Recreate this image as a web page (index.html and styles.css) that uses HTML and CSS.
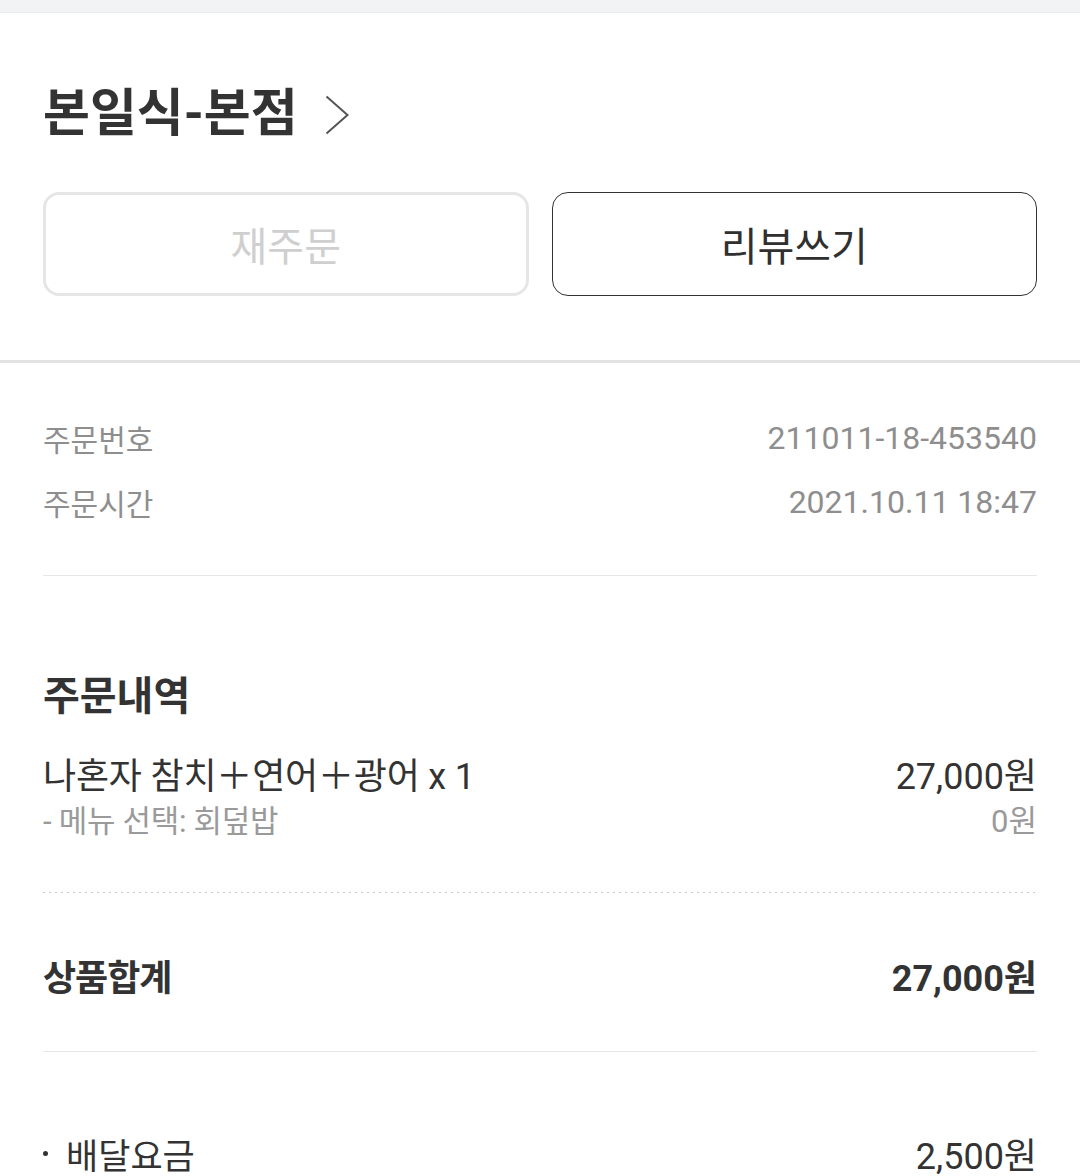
FILE: index.html
```html
<!DOCTYPE html>
<html lang="ko">
<head>
<meta charset="utf-8">
<title>주문상세</title>
<link rel="stylesheet" href="styles.css">
</head>
<body>
<div class="topbar"></div>
<section class="store">
  <div class="store-title">
    <h1>본일식-본점</h1>
    <svg class="chev" width="25" height="40" viewBox="0 0 25 40"><polyline points="1.5,1.5 22.5,20 1.5,38.5" fill="none" stroke="#555" stroke-width="2"/></svg>
  </div>
  <div class="actions">
    <button class="btn btn-off">재주문</button>
    <button class="btn btn-on">리뷰쓰기</button>
  </div>
</section>
<section class="info">
  <div class="row info-row"><span class="ko">주문번호</span><span class="num">211011-18-453540</span></div>
  <div class="row info-row"><span class="ko">주문시간</span><span class="num">2021.10.11 18:47</span></div>
</section>
<section class="order">
  <h2 class="ko">주문내역</h2>
  <div class="row item-row"><span class="ko">나혼자 참치＋연어＋광어 x 1</span><span class="price">27,000원</span></div>
  <div class="row opt-row"><span class="ko">- 메뉴 선택: 회덮밥</span><span class="price">0원</span></div>
</section>
<div class="dotted"></div>
<section class="sum">
  <div class="row sum-row"><span class="ko">상품합계</span><span class="price">27,000원</span></div>
</section>
<section class="fees">
  <div class="row fee-row"><span class="fee-label"><i class="dot"></i><span class="ko">배달요금</span></span><span class="price">2,500원</span></div>
</section>
</body>
</html>
```

FILE: styles.css
```css
* { box-sizing: border-box; }
html, body { margin: 0; padding: 0; background: #fff; }
body {
  font-family: Roboto, "Noto Sans CJK KR", sans-serif;
  color: #333;
  width: 1080px;
  overflow: hidden;
}
.topbar {
  height: 13px;
  background: #f2f3f5;
  border-bottom: 1px solid #ebecee;
}
.store {
  padding: 71px 43px 64px;
  border-bottom: 3px solid #e2e2e2;
}
.store-title {
  display: flex;
  align-items: center;
  gap: 27px;
  height: 60px;
}
.store-title h1 {
  margin: 0;
  font-size: 51px;
  font-weight: 700;
  line-height: 60px;
  color: #333;
}
.chev { display: block; margin-top: 2px; }
.actions {
  display: grid;
  grid-template-columns: 1fr 1fr;
  gap: 23px;
  margin-top: 48px;
}
.btn {
  height: 104px;
  border-radius: 16px;
  background: #fff;
  font-family: Roboto, "Noto Sans CJK KR", sans-serif;
  font-size: 40px;
  padding: 0;
}
.btn-off { border: 3px solid #e6e6e6; color: #cfcfcf; }
.btn-on { border: 1.5px solid #333; color: #303030; }
.row {
  display: flex;
  justify-content: space-between;
  align-items: center;
}
.info {
  margin: 0 43px;
  padding: 43px 0 41px;
  border-bottom: 1px solid #e6e6e6;
}
.info-row {
  height: 64px;
  font-size: 32px;
  color: #8e8e8e;
}
.info-row .ko { font-size: 30px; }
.order {
  margin: 0 43px;
  padding: 93px 0 53px;
}
.order h2 {
  margin: 0 0 24px;
  font-size: 40px;
  font-weight: 700;
  line-height: 56px;
  color: #333;
}
.item-row { height: 48px; font-size: 36px; color: #333; }
.item-row .ko { letter-spacing: -0.2px; }
.opt-row { height: 42px; font-size: 31px; color: #9a9a9a; }
.opt-row .ko { letter-spacing: -0.3px; }
.dotted {
  margin: 0 43px;
  height: 1px;
  background: repeating-linear-gradient(to right, #c9c9c9 0 2px, transparent 2px 6px);
}
.sum {
  margin: 0 43px;
  padding: 54px 0 48px;
  border-bottom: 1px solid #e6e6e6;
}
.sum-row {
  height: 56px;
  font-size: 36px;
  font-weight: 700;
  color: #333;
}
.sum-row .ko { letter-spacing: -1px; }
.fees {
  margin: 0 43px;
  padding-top: 73px;
}
.fee-row { height: 56px; font-size: 36px; color: #333; }
.fee-row .ko { font-size: 35px; }
.fee-label { display: flex; align-items: center; }
.dot {
  display: block;
  width: 5px;
  height: 5px;
  border-radius: 50%;
  background: #333;
  margin-right: 18px;
}
```
